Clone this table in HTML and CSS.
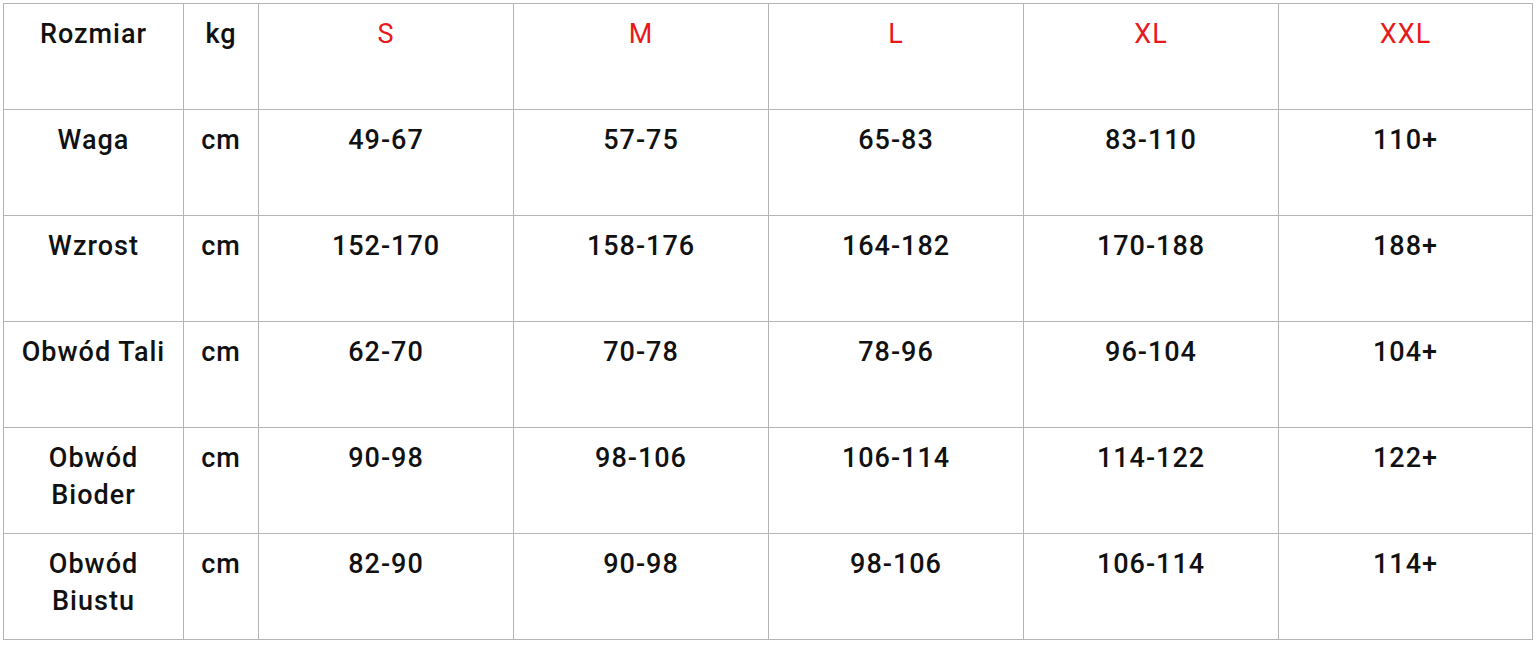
FILE: index.html
```html
<!DOCTYPE html>
<html lang="pl">
<head>
<meta charset="utf-8">
<title>Tabela rozmiarów</title>
<link rel="stylesheet" href="styles.css">
</head>
<body>
<table class="sizes">
  <colgroup>
    <col class="c-name"><col class="c-unit"><col class="c-val"><col class="c-val"><col class="c-val"><col class="c-val"><col class="c-last">
  </colgroup>
  <tr>
    <td>Rozmiar</td><td>kg</td>
    <td class="red">S</td><td class="red">M</td><td class="red">L</td><td class="red">XL</td><td class="red">XXL</td>
  </tr>
  <tr>
    <td>Waga</td><td>cm</td><td>49-67</td><td>57-75</td><td>65-83</td><td>83-110</td><td>110+</td>
  </tr>
  <tr>
    <td>Wzrost</td><td>cm</td><td>152-170</td><td>158-176</td><td>164-182</td><td>170-188</td><td>188+</td>
  </tr>
  <tr>
    <td>Obwód Tali</td><td>cm</td><td>62-70</td><td>70-78</td><td>78-96</td><td>96-104</td><td>104+</td>
  </tr>
  <tr>
    <td>Obwód<br>Bioder</td><td>cm</td><td>90-98</td><td>98-106</td><td>106-114</td><td>114-122</td><td>122+</td>
  </tr>
  <tr>
    <td>Obwód<br>Biustu</td><td>cm</td><td>82-90</td><td>90-98</td><td>98-106</td><td>106-114</td><td>114+</td>
  </tr>
</table>
</body>
</html>
```
FILE: styles.css
```css
html, body {
  margin: 0;
  padding: 0;
  background: #ffffff;
}
body {
  padding: 3px 0 0 3px;
}
.sizes {
  border-collapse: collapse;
  table-layout: fixed;
  width: 1530px;
  font-family: "Roboto", "Liberation Sans", sans-serif;
  font-weight: 500;
  font-size: 27px;
  line-height: 37px;
  color: #111111;
}
.c-name { width: 180px; }
.c-unit { width: 75px; }
.c-val { width: 255px; }
.c-last { width: 254px; }
.sizes td {
  border: 1px solid #b4b4b4;
  height: 106px;
  box-sizing: border-box;
  padding: 12px 0 0 0;
  vertical-align: top;
  text-align: center;
  letter-spacing: 1px;
}
.sizes .red {
  color: #e8191c;
  font-weight: 400;
}
```
